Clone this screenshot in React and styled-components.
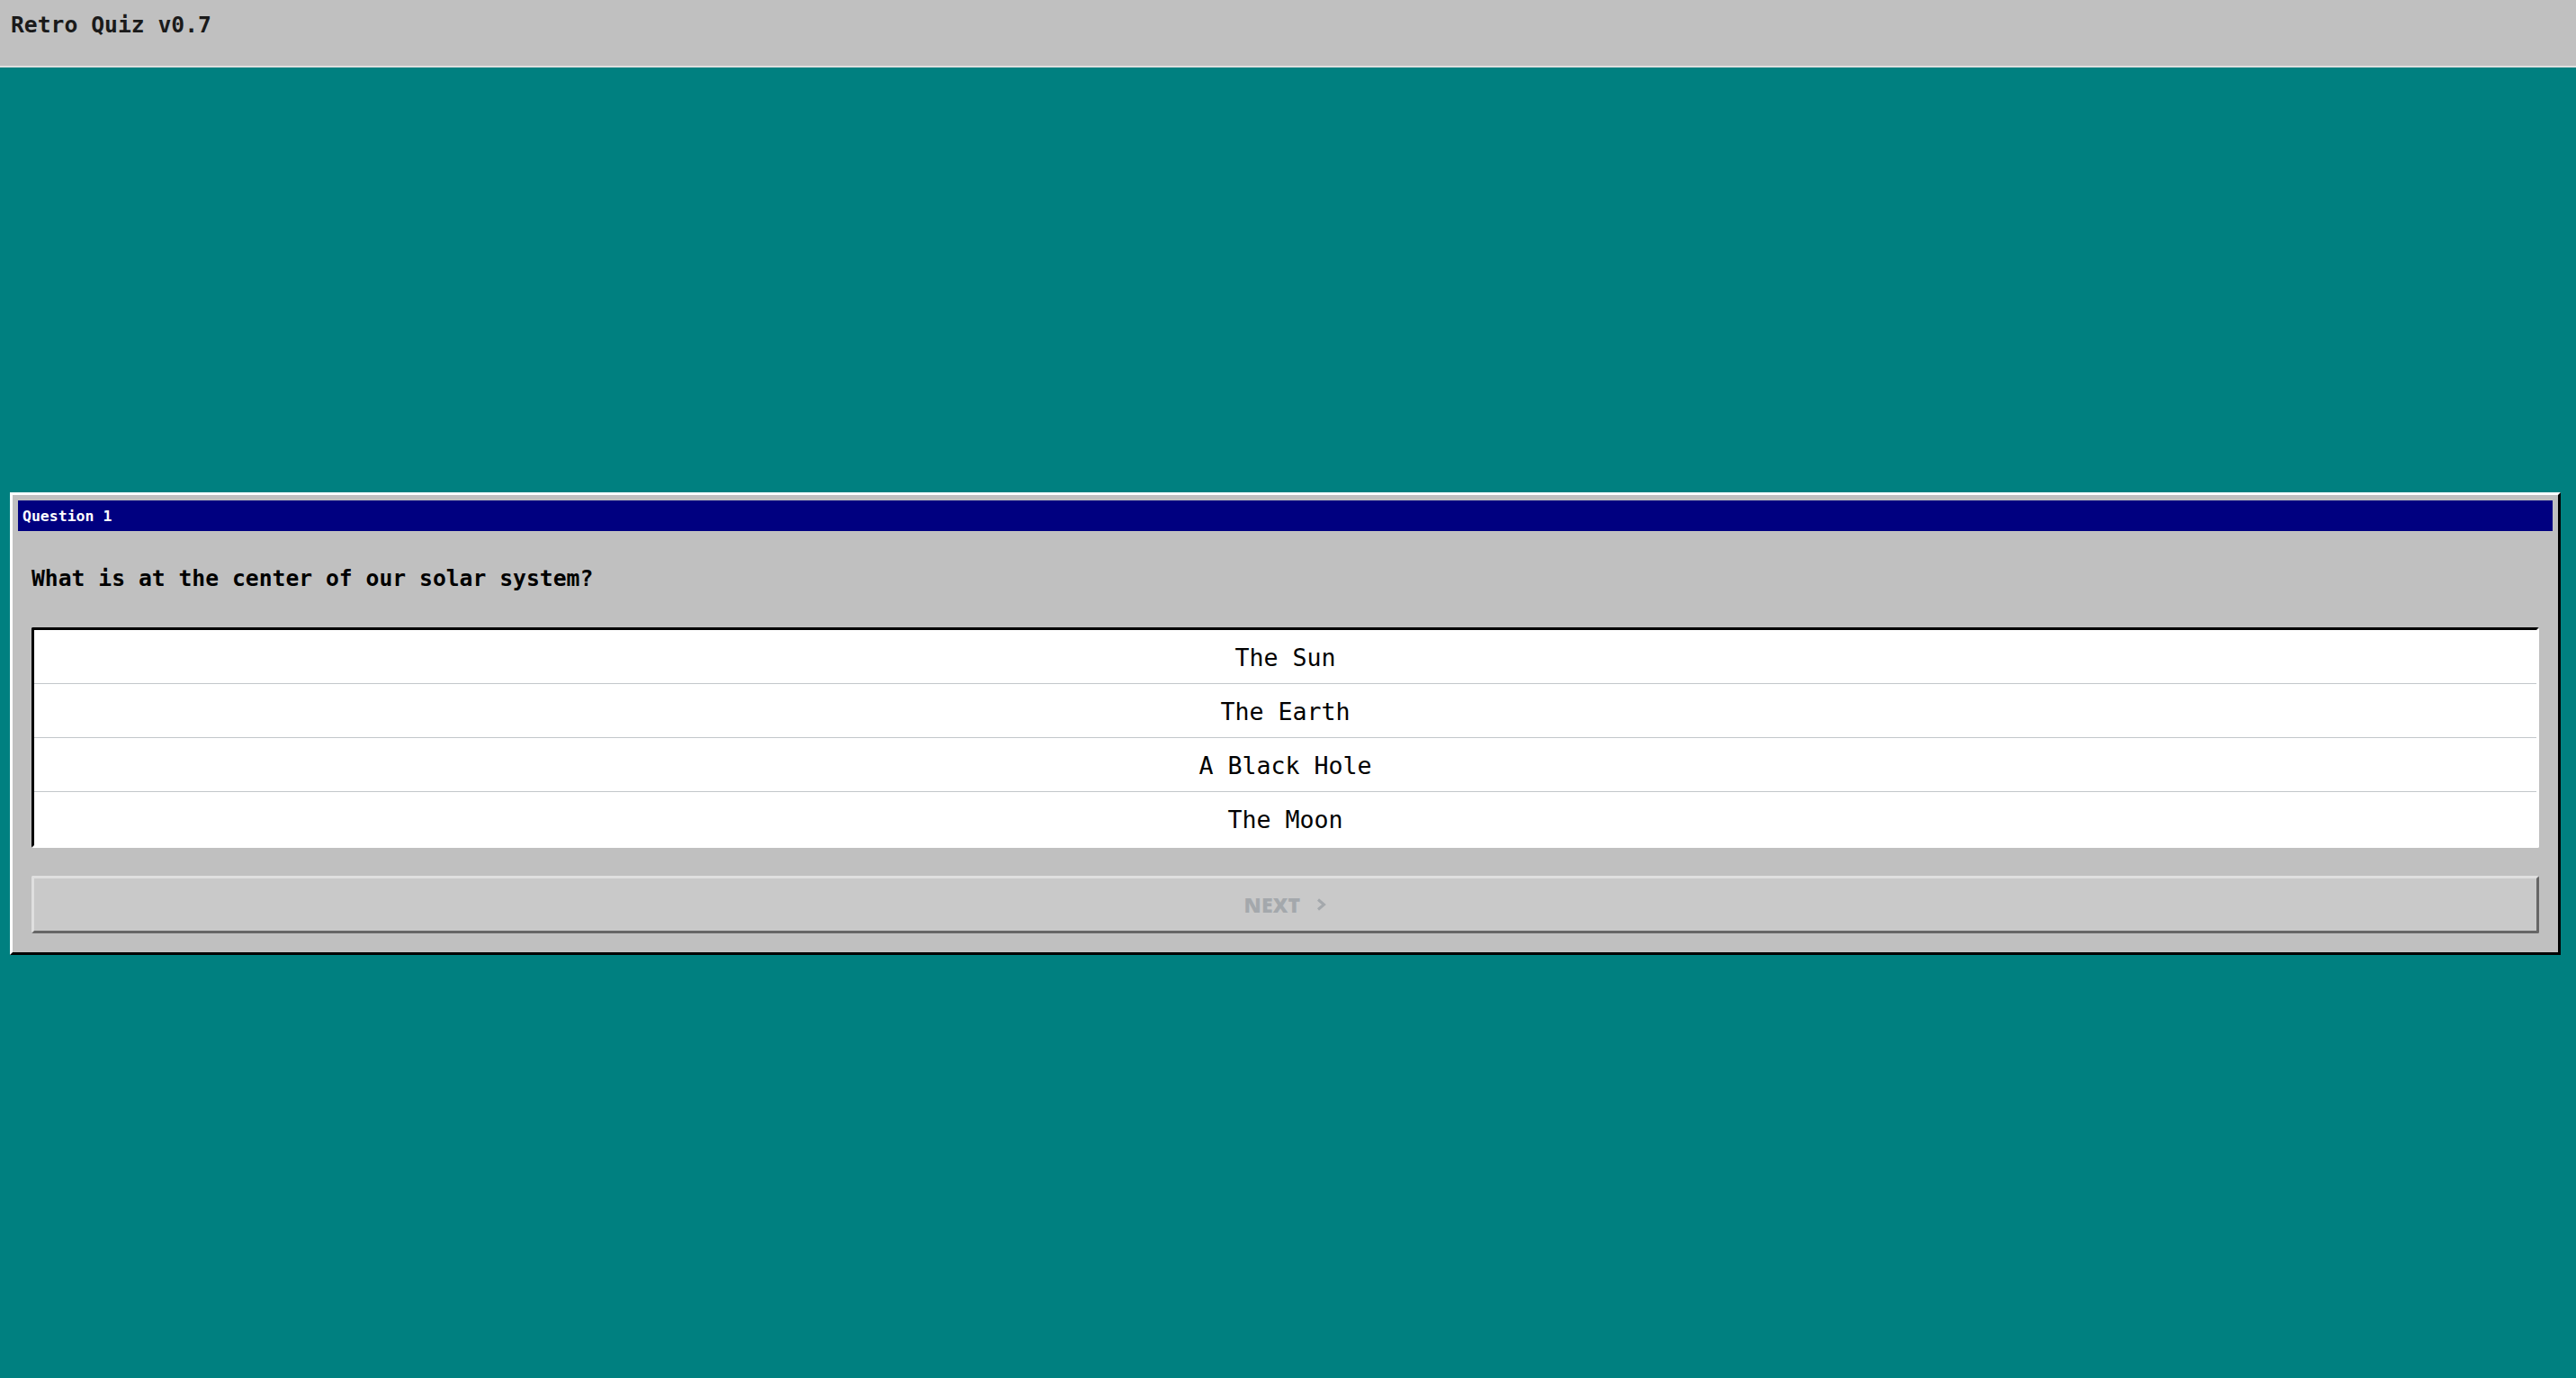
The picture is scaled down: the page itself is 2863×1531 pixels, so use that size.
import React, { useState } from 'react';
import styled, { createGlobalStyle } from 'styled-components';

const GlobalStyle = createGlobalStyle`
  html, body {
    margin: 0;
    padding: 0;
    background: #008080;
  }
  #root {
    min-height: 100vh;
  }
`;

const mono = `"DejaVu Sans Mono", "Liberation Mono", monospace`;

const Page = styled.div`
  min-height: 100vh;
  display: flex;
  flex-direction: column;
  background: #008080;
  font-family: ${mono};
`;

const TopBar = styled.header`
  height: 75px;
  box-sizing: border-box;
  padding: 13px 12px 0;
  background: #c0c0c0;
  border-bottom: 2px solid #dfdfdf;
  font-size: 24.7px;
  font-weight: 700;
  color: #1a1a1a;
`;

const Stage = styled.main`
  flex: 1;
  display: flex;
  align-items: center;
  padding: 2px 17px 0 11px;
`;

const Window = styled.section`
  flex: 1;
  background: #c0c0c0;
  border: 3px solid;
  border-color: #ffffff #000000 #000000 #ffffff;
  padding: 6px;
`;

const TitleBar = styled.div`
  height: 34px;
  display: flex;
  align-items: center;
  padding: 0 5px;
  background: #000080;
  color: #ffffff;
  font-size: 16.5px;
  font-weight: 700;
`;

const Body = styled.div`
  padding: 15px;
`;

const Question = styled.p`
  margin: 24px 0 40px;
  font-size: 24.7px;
  line-height: 28px;
  font-weight: 700;
  color: #000;
`;

const Options = styled.ul`
  list-style: none;
  margin: 0;
  padding: 0;
  background: #ffffff;
  border: 3px solid;
  border-color: #000000 #ffffff #ffffff #000000;
  border-radius: 2px;
`;

const Option = styled.li`
  height: 59px;
  display: flex;
  align-items: center;
  justify-content: center;
  padding-top: 1px;
  box-sizing: border-box;
  font-size: 26.6px;
  color: ${p => (p.$selected ? '#ffffff' : '#000000')};
  background: ${p => (p.$selected ? '#000080' : 'transparent')};
  cursor: pointer;
  &:not(:last-child) {
    border-bottom: 1px solid #c3c7cb;
    height: 60px;
  }
`;

const NextButton = styled.button`
  display: flex;
  width: 100%;
  height: 64px;
  margin-top: 31px;
  align-items: center;
  justify-content: center;
  gap: 18px;
  padding: 0;
  background: #c9c9c9;
  border: 3px solid;
  border-color: #dfdfdf #666666 #666666 #dfdfdf;
  border-radius: 2px;
  font-family: "Open Sans", "Liberation Sans", sans-serif;
  font-size: 23px;
  font-weight: 800;
  letter-spacing: 0.2px;
  color: ${p => (p.disabled ? '#a4a8ac' : '#000000')};
  cursor: ${p => (p.disabled ? 'default' : 'pointer')};

  svg {
    display: block;
  }
`;

const answers = ['The Sun', 'The Earth', 'A Black Hole', 'The Moon'];

const App = () => {
  const [picked, setPicked] = useState(null);

  return (
    <Page>
      <GlobalStyle />
      <TopBar>Retro Quiz v0.7</TopBar>
      <Stage>
        <Window>
          <TitleBar>Question 1</TitleBar>
          <Body>
            <Question>What is at the center of our solar system?</Question>
            <Options>
              {answers.map((a, i) => (
                <Option key={a} $selected={picked === i} onClick={() => setPicked(i)}>
                  {a}
                </Option>
              ))}
            </Options>
            <NextButton disabled={picked === null}>
              <span>NEXT</span>
              <svg width="11" height="14" viewBox="0 0 11 14">
                <polyline points="2,1.5 8.5,7 2,12.5" fill="none" stroke="currentColor" strokeWidth="3" />
              </svg>
            </NextButton>
          </Body>
        </Window>
      </Stage>
    </Page>
  );
};

export default App;
